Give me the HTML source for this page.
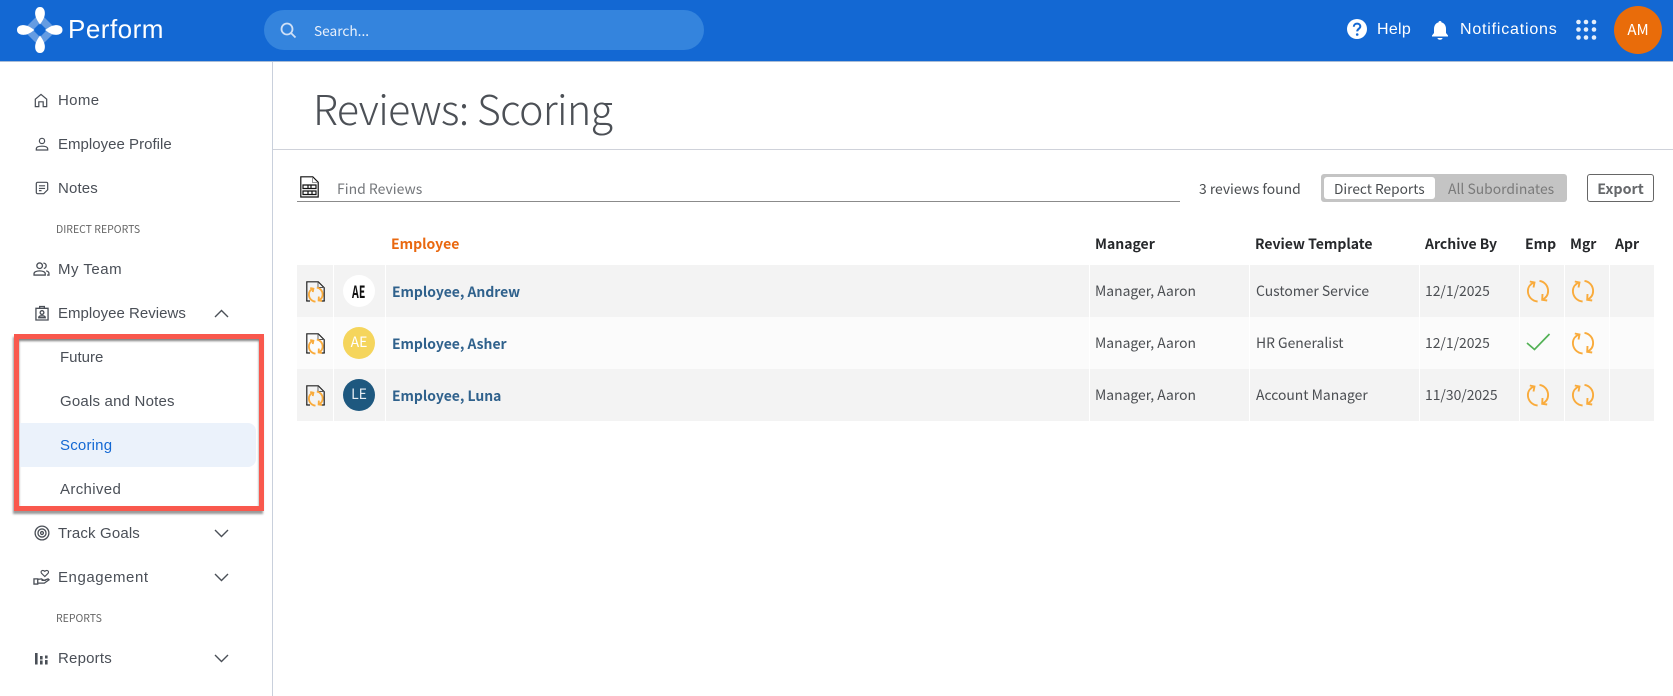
<!DOCTYPE html>
<html><head><meta charset="utf-8"><style>
html,body{margin:0;padding:0;width:1673px;height:696px;overflow:hidden;background:#fff}
body{position:relative;font-family:"Noto Sans CJK JP","Liberation Sans",sans-serif;color:#3c3f44}
.a,.t,.n,.c,.b{position:absolute}
.t,.n,.c,.b{white-space:nowrap;line-height:20px}
.n{font-family:"Liberation Sans",sans-serif;font-size:15px;color:#4a4f57;left:58px;letter-spacing:.1px}
.s{font-family:"Noto Sans CJK JP",sans-serif;font-size:10.5px;color:#666;left:56px;letter-spacing:0}
.c{font-size:13.9px;color:#4b4e52}
.b{font-size:14px;font-weight:700;color:#26282b}
.e{font-size:13.9px;font-weight:700;color:#2f618c;left:392px;position:absolute;line-height:20px;white-space:nowrap}
svg{position:absolute;overflow:visible}
.i{fill:none;stroke:#4a4f57;stroke-width:1.4}
.sep{position:absolute;width:1px;top:265px;height:156px;background:#fff}
.av{position:absolute;left:343px;width:32px;height:32px;border-radius:50%;text-align:center;line-height:31px;font-size:14px}
</style></head><body>
<svg width="0" height="0" style="position:absolute"><defs>
<g id="sync" fill="none" stroke="#f9ab3c" stroke-width="1.900"><path d="M7 2.500C3.200 4 .9 7.300.9 11c0 5.500 4 10 9.700 10.500"/><path d="M2.800 1.500 7.500 2.500 6.500 7.500"/><path d="M12.500 .9C17.500 1.500 21.100 5.800 21.100 11c0 3.800-2 6.800-5.600 8.500"/><path d="M15.500 14 15.200 19.800 20.200 20.500"/></g>
<g id="sync2" fill="none" stroke="#f9ab3c" stroke-width="2.700"><path d="M7 2.500C3.200 4 .9 7.300.9 11c0 5.500 4 10 9.700 10.500"/><path d="M2.800 1.500 7.500 2.500 6.500 7.500"/><path d="M12.500 .9C17.500 1.500 21.100 5.800 21.100 11c0 3.800-2 6.800-5.600 8.500"/><path d="M15.500 14 15.200 19.800 20.200 20.500"/></g>
<g id="doc"><path d="M.8 20V.8h11.500l5.900 5.900V20" fill="none" stroke="#222" stroke-width="1.200"/><path d="M.2 20H4M15 20h3.800" stroke="#222" stroke-width="1.300"/><path d="M12 1v5.500h6" fill="none" stroke="#555" stroke-width=".9"/><use href="#sync2" transform="translate(2.300 6) scale(.68)"/></g>
<path id="dn" d="M1 1l6.500 6.500L14 1" fill="none" stroke="#4a4f57" stroke-width="1.400"/>
</defs></svg>

<!-- header -->
<div class="a" style="left:0;top:0;width:1673px;height:61px;background:#1368d3;border-bottom:1px solid #a9bcd6"></div>
<svg style="left:16.500px;top:6.500px" width="46" height="46" viewBox="0 0 46 46">
<path d="M23 6 40 23 23 40 6 23Z" fill="#fff" opacity=".35"/><path d="M23 16 30 23 23 30 16 23Z" fill="#1368d3"/>
<path d="M23 0c4 0 5.200 4 4.800 7.500-.6 4-2.800 7-4.800 10-2-3-4.200-6-4.800-10C17.800 4 19 0 23 0Z" fill="#fff"/>
<path d="M23 46c4 0 5.200-4 4.800-7.500-.6-4-2.800-7-4.800-10-2 3-4.200 6-4.800 10C17.800 42 19 46 23 46Z" fill="#fff"/>
<path d="M0 23c0-4 4-5 7.500-4.800 4 .3 7 2.800 10 4.800-3 2-6 4.500-10 4.800C4 28 0 27 0 23Z" fill="#fff"/>
<path d="M45.500 23c0-4-4-5-7.500-4.800-4 .3-7 2.800-10 4.800 3 2 6 4.500 10 4.800 3.500.2 7.500-.8 7.500-4.800Z" fill="#fff"/>
</svg>
<div class="t" style="left:68px;top:19px;font:400 26px/20px 'Liberation Sans',sans-serif;color:#fff;letter-spacing:.5px">Perform</div>
<div class="a" style="left:264px;top:10px;width:440px;height:40px;border-radius:20px;background:#3484dd"></div>
<svg style="left:280px;top:22px" width="17" height="17" fill="none" stroke="#cfe0f6" stroke-width="1.800"><circle cx="7" cy="7" r="5.500"/><path d="m11 11 4.500 4.500"/></svg>
<div class="t" style="left:314px;top:20px;font-size:13.700px;color:#e8f0fb">Search...</div>
<svg style="left:1347px;top:19px" width="20" height="20"><circle cx="10" cy="10" r="10" fill="#fff"/><path d="M6.800 7.800c0-2 1.500-3.200 3.300-3.200s3.200 1.100 3.200 2.800c0 2.400-3.100 2.400-3.100 5" fill="none" stroke="#1368d3" stroke-width="2"/><circle cx="10.200" cy="15.500" r="1.300" fill="#1368d3"/></svg>
<div class="t" style="left:1377px;top:20px;font:400 16px/20px 'Liberation Sans',sans-serif;color:#fff;letter-spacing:.3px">Help</div>
<svg style="left:1431px;top:20px" width="18" height="20" fill="#fff"><path d="M9 1c1 0 1.500.6 1.500 1.400C13.500 3.200 15 5.800 15 9v4l2 2.500v1H1v-1L3 13V9c0-3.200 1.500-5.800 4.500-6.600C7.500 1.600 8 1 9 1Z"/><path d="M6.500 18h5c0 1-1.200 1.800-2.500 1.800S6.500 19 6.500 18Z"/></svg>
<div class="t" style="left:1460px;top:20px;font:400 16px/20px 'Liberation Sans',sans-serif;color:#fff;letter-spacing:.8px">Notifications</div>
<svg style="left:1576px;top:20px" width="21" height="20" fill="#e4eefb"><circle cx="2.500" cy="2" r="2.300"/><circle cx="10" cy="2" r="2.300"/><circle cx="18" cy="2" r="2.300"/><circle cx="2.500" cy="9.500" r="2.300"/><circle cx="10" cy="9.500" r="2.300"/><circle cx="18" cy="9.500" r="2.300"/><circle cx="2.500" cy="17.500" r="2.300"/><circle cx="10" cy="17.500" r="2.300"/><circle cx="18" cy="17.500" r="2.300"/></svg>
<div class="a" style="left:1614px;top:6px;width:48px;height:48px;border-radius:50%;background:#e96c0a;color:#fff;font-size:15px;text-align:center;line-height:47px">AM</div>

<!-- sidebar -->
<div class="a" style="left:272px;top:62px;width:1px;height:634px;background:#c9d0dc"></div>
<svg style="left:34px;top:93px" width="14" height="15" viewBox="0 0 16 17" class="i"><path d="M1.500 7 8 1.500 14.500 7v8.500h-4V10h-5v5.500h-4Z"/></svg>
<div class="n" style="top:91px;letter-spacing:.35px">Home</div>
<svg style="left:35px;top:137px" width="14" height="14" viewBox="0 0 16 16" class="i"><circle cx="8" cy="4.500" r="3"/><path d="M1.500 14.800v-1.300c0-2 3-3 6.500-3s6.500 1 6.500 3v1.300Z"/></svg>
<div class="n" style="top:135px;letter-spacing:.02px">Employee Profile</div>
<svg style="left:35px;top:181px" width="14" height="14" viewBox="0 0 16 16" class="i"><path d="M10 14.500H3a1.500 1.500 0 0 1-1.500-1.500V3A1.500 1.500 0 0 1 3 1.500h10A1.500 1.500 0 0 1 14.500 3v7ZM4.500 5.500h7M4.500 8.500h7M4.500 11h3"/></svg>
<div class="n" style="top:179px;letter-spacing:.15px">Notes</div>
<div class="n s" style="top:220px">DIRECT REPORTS</div>
<svg style="left:33px;top:262px" width="17" height="14" viewBox="0 0 18 15" class="i"><circle cx="7" cy="4" r="3"/><path d="M1 14v-1.500c0-2 3-3 6-3s6 1 6 3V14ZM11 1.200c2 0 3 1.300 3 2.800s-1 2.800-2.500 2.800M14 9.500c2 .4 3 1.500 3 3V14h-2"/></svg>
<div class="n" style="top:260px;letter-spacing:.5px">My Team</div>
<svg style="left:35px;top:305px" width="14" height="16" viewBox="0 0 15 17" class="i"><path d="M1 3.500h13v12.500H1ZM5 3.500V1.500h5v2"/><circle cx="7.500" cy="8" r="2"/><path d="M4 13.500c0-1.500 1.500-2 3.500-2s3.500.5 3.500 2Z"/></svg>
<div class="n" style="top:304px;letter-spacing:.02px">Employee Reviews</div>
<svg style="left:214px;top:309px" width="15" height="9"><path d="M1 8l6.500-6.500L14 8" fill="none" stroke="#4a4f57" stroke-width="1.400"/></svg>

<div class="a" style="left:14px;top:334px;width:240px;height:167px;border:5px solid #f9584d;box-shadow:-1px 3px 2px 0 rgba(0,0,0,.4), inset 0 2px 2px rgba(0,0,0,.5)"></div>
<div class="a" style="left:20px;top:423px;width:236px;height:44px;background:#ebf2fb;border-radius:0 8px 8px 0"></div>
<div class="n" style="left:60px;top:348px;letter-spacing:0">Future</div>
<div class="n" style="left:60px;top:392px;letter-spacing:.2px">Goals and Notes</div>
<div class="n" style="left:60px;top:436px;color:#1368d3;letter-spacing:.2px">Scoring</div>
<div class="n" style="left:60px;top:480px;letter-spacing:.35px">Archived</div>

<svg style="left:34px;top:525px" width="16" height="16" viewBox="0 0 17 17" class="i"><circle cx="8.500" cy="8.500" r="7.300"/><circle cx="8.500" cy="8.500" r="4.300"/><circle cx="8.500" cy="8.500" r="1.500"/></svg>
<div class="n" style="top:524px;letter-spacing:.15px">Track Goals</div>
<svg style="left:214px;top:529px" width="15" height="9"><use href="#dn"/></svg>
<svg style="left:33px;top:569px" width="17" height="16" viewBox="0 0 18 17" class="i"><path d="M1 10.500h4v5.500H1ZM5 11l4-.5 2.500 1.500H9M5 15h7l5-3.500-1-1-4 1.500"/><path d="M12.500 8 9 4.500C7.500 2.500 10 .2 12.500 2.500 15 .2 17.500 2.500 16 4.500Z" stroke-width="1.200"/></svg>
<div class="n" style="top:568px;letter-spacing:.55px">Engagement</div>
<svg style="left:214px;top:573px" width="15" height="9"><use href="#dn"/></svg>
<div class="n s" style="top:609px">REPORTS</div>
<svg style="left:35px;top:652px" width="13" height="13" fill="#4a4f57"><rect x="0" y="1" width="2.600" height="11.500"/><rect x="5" y="4" width="2.600" height="3.500"/><rect x="5" y="8.500" width="2.600" height="4"/><rect x="10" y="3.500" width="2.600" height="3"/><rect x="10" y="8" width="2.600" height="4.500"/></svg>
<div class="n" style="top:649px;letter-spacing:.2px">Reports</div>
<svg style="left:214px;top:654px" width="15" height="9"><use href="#dn"/></svg>

<!-- title -->
<div class="t" style="left:313px;top:97px;font:300 41px/20px 'Noto Sans CJK JP','Liberation Sans',sans-serif;color:#4c5056;letter-spacing:-.6px">Reviews: Scoring</div>
<div class="a" style="left:273px;top:149px;width:1400px;height:1px;background:#cfd2da"></div>

<!-- filter -->
<svg style="left:300px;top:176px" width="19" height="22"><path d="M.8 21V.8h12l5.400 5.400V21Z" fill="none" stroke="#111" stroke-width="1.200"/><path d="M12.500 1v5.500H18" fill="none" stroke="#777" stroke-width=".8"/><path d="M3 9h13v3.500H3ZM3 15h13v3.500H3ZM8 9v3.500M11 9v3.500M8 15v3.500M12 15v3.500" fill="none" stroke="#111" stroke-width="1.200"/></svg>
<div class="t" style="left:337px;top:179px;font-size:14px;color:#74777b">Find Reviews</div>
<div class="a" style="left:297px;top:201px;width:883px;height:1px;background:#8b8b8b"></div>
<div class="t" style="left:1199px;top:179px;font-size:13.900px;color:#4a4d50">3 reviews found</div>
<div class="a" style="left:1321px;top:174px;width:246px;height:28px;border-radius:3px;background:#c4c4c4"></div>
<div class="a" style="left:1324px;top:177px;width:111px;height:22px;border-radius:3px;background:#fff"></div>
<div class="t" style="left:1334px;top:178px;font-size:13.700px;color:#4a4d50">Direct Reports</div>
<div class="t" style="left:1448px;top:179px;font-size:13.900px;color:#7a7a7a">All Subordinates</div>
<div class="a" style="left:1587px;top:174px;width:65px;height:26px;border:1px solid #666;border-radius:3px;text-align:center;font-size:14.300px;font-weight:700;color:#66686b;line-height:28px">Export</div>

<!-- table head -->
<div class="b" style="left:391px;top:234px;color:#e9680f">Employee</div>
<div class="b" style="left:1095px;top:234px">Manager</div>
<div class="b" style="left:1255px;top:234px">Review Template</div>
<div class="b" style="left:1425px;top:234px">Archive By</div>
<div class="b" style="left:1525px;top:234px">Emp</div>
<div class="b" style="left:1570px;top:234px">Mgr</div>
<div class="b" style="left:1615px;top:234px">Apr</div>

<!-- rows -->
<div class="a" style="left:297px;top:265px;width:1357px;height:52px;background:#f3f3f3"></div>
<div class="a" style="left:297px;top:317px;width:1357px;height:52px;background:#fbfbfb"></div>
<div class="a" style="left:297px;top:369px;width:1357px;height:52px;background:#f3f3f3"></div>
<div class="sep" style="left:333px"></div><div class="sep" style="left:385px"></div><div class="sep" style="left:1089px"></div><div class="sep" style="left:1249px"></div><div class="sep" style="left:1419px"></div><div class="sep" style="left:1519px"></div><div class="sep" style="left:1564px"></div><div class="sep" style="left:1609px"></div>

<svg style="left:306px;top:281px" width="19" height="21"><use href="#doc"/></svg>
<svg style="left:306px;top:333px" width="19" height="21"><use href="#doc"/></svg>
<svg style="left:306px;top:385px" width="19" height="21"><use href="#doc"/></svg>

<div class="av" style="top:275px;background:#fff;color:#111;font-weight:700"><span style="display:inline-block;font-size:17px;transform:scaleX(.62)">AE</span></div>
<div class="av" style="top:327px;background:#f5d55c;color:#fff">AE</div>
<div class="av" style="top:379px;background:#1e587f;color:#e6edf3">LE</div>

<div class="e" style="top:282px">Employee, Andrew</div>
<div class="e" style="top:334px">Employee, Asher</div>
<div class="e" style="top:386px">Employee, Luna</div>

<div class="c" style="left:1095px;top:281px">Manager, Aaron</div>
<div class="c" style="left:1095px;top:333px">Manager, Aaron</div>
<div class="c" style="left:1095px;top:385px">Manager, Aaron</div>
<div class="c" style="left:1256px;top:281px">Customer Service</div>
<div class="c" style="left:1256px;top:333px">HR Generalist</div>
<div class="c" style="left:1256px;top:385px">Account Manager</div>
<div class="c" style="left:1425px;top:281px">12/1/2025</div>
<div class="c" style="left:1425px;top:333px">12/1/2025</div>
<div class="c" style="left:1425px;top:385px">11/30/2025</div>

<svg style="left:1527px;top:280px" width="22" height="22"><use href="#sync"/></svg>
<svg style="left:1572px;top:280px" width="22" height="22"><use href="#sync"/></svg>
<svg style="left:1526px;top:333px" width="25" height="18"><path d="M1 10l7.500 6.500L23.500 1" fill="none" stroke="#52b155" stroke-width="1.700"/></svg>
<svg style="left:1572px;top:332px" width="22" height="22"><use href="#sync"/></svg>
<svg style="left:1527px;top:384px" width="22" height="22"><use href="#sync"/></svg>
<svg style="left:1572px;top:384px" width="22" height="22"><use href="#sync"/></svg>
</body></html>
